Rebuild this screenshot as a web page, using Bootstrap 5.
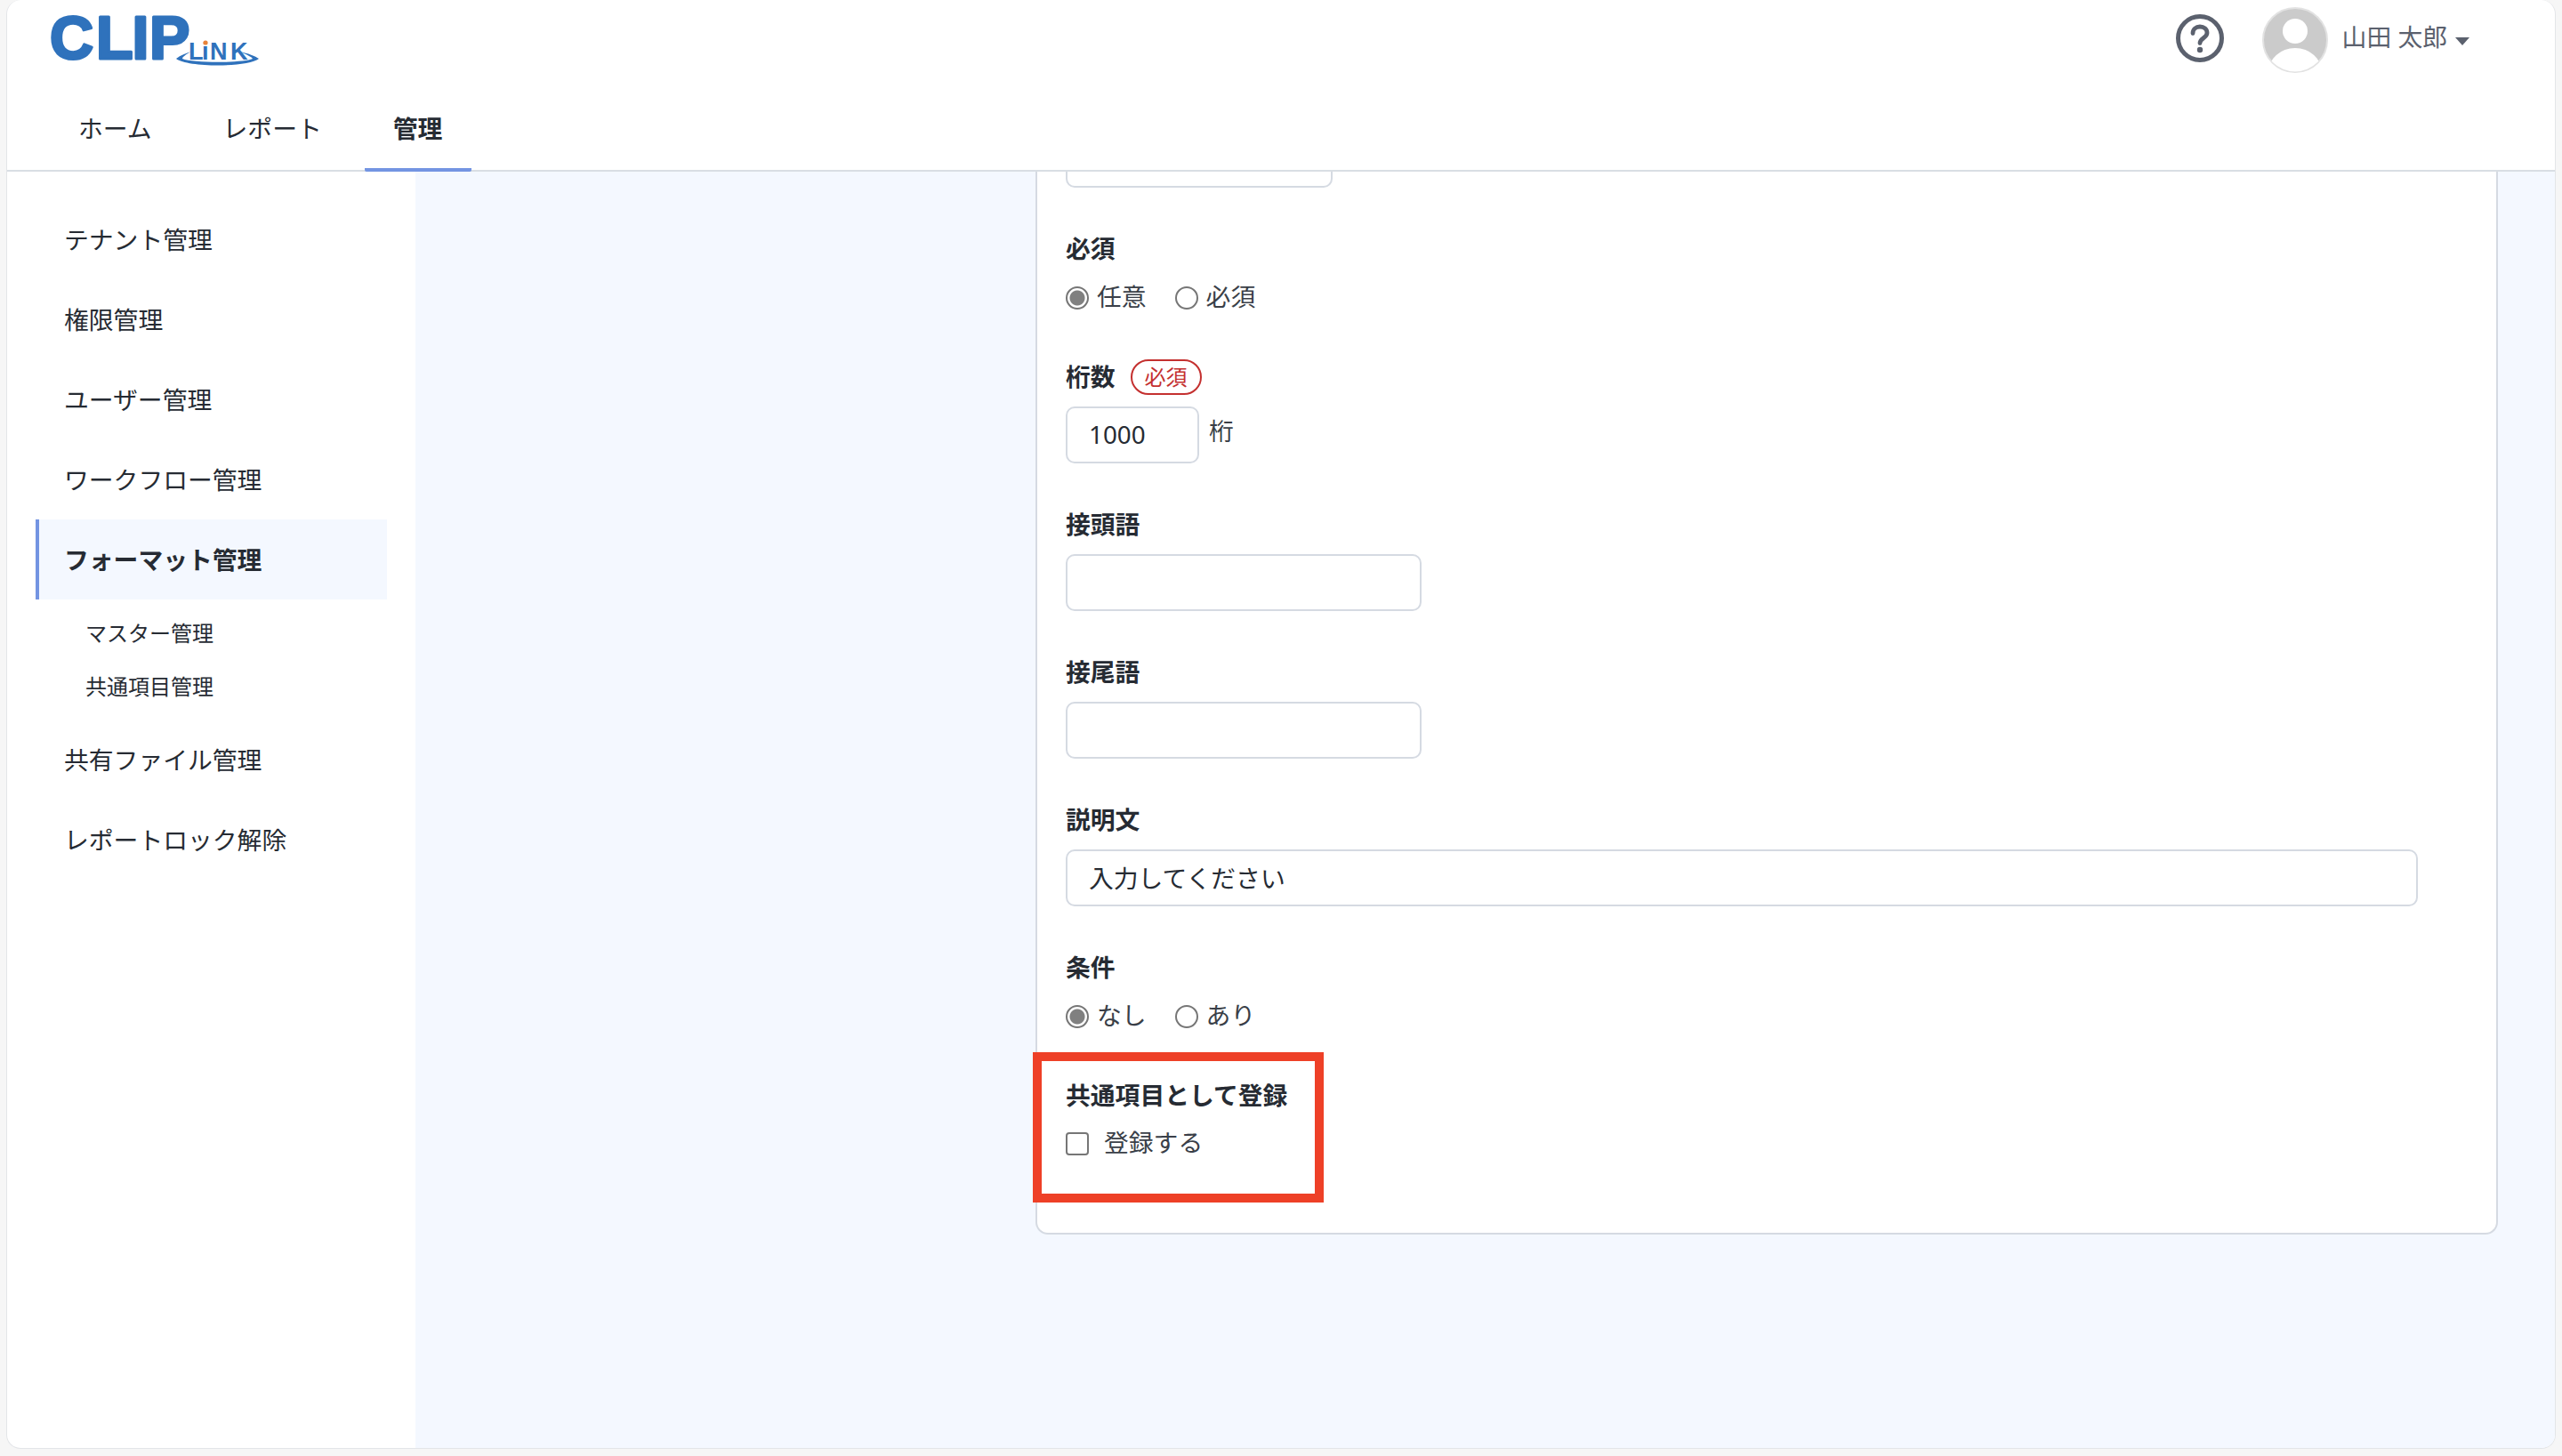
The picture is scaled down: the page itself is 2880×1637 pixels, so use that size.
<!DOCTYPE html>
<html lang="ja">
<head>
<meta charset="utf-8">
<title>フォーマット管理</title>
<link rel="stylesheet" href="https://cdn.jsdelivr.net/npm/bootstrap@5.3.0/dist/css/bootstrap.min.css">
<style>
html,body{height:100%;}
body{background:#f6f6f6;font-family:"Noto Sans","Noto Sans CJK JP",sans-serif;font-size:27.8px;color:#262b33;overflow:hidden;}
.app-window{margin:0 7px;height:1629px;background:#fff;border:1px solid #e3e5e8;border-top:0;border-radius:16px;overflow:hidden;display:flex;flex-direction:column;}
.app-head{height:193px;flex:none;border-bottom:2px solid #d9dee4;padding-left:42px;padding-right:96px;position:relative;}
.logo-wrap{display:block;width:262px;height:78px;}
.top-nav{margin-top:26px;margin-left:8px;}
.top-nav .nav-link{color:#262b33;font-size:27.8px;line-height:40px;padding:20px 30px 29px;border-bottom:4px solid transparent;border-radius:2px;height:89px;}
.top-nav .nav-link:nth-child(1){padding-right:29px;padding-left:30px;}
.top-nav .nav-link:nth-child(2){padding-left:51px;padding-right:48px;}
.top-nav .nav-link.on{font-weight:700;border-bottom-color:#7394e2;padding-left:32px;padding-right:33px;}
.head-right{position:absolute;right:96px;top:8px;display:flex;align-items:center;color:#5b616e;}
.help-ico{width:56px;height:56px;margin-right:39px;margin-top:-4px;}
.avatar-ico{width:74px;height:74px;margin-right:16px;margin-left:3px;}
.user-name{line-height:66px;margin-top:-8px;}
.caret-ico{width:16px;height:9px;margin-left:9px;margin-top:2px;}
.body-row{flex:1;display:flex;min-height:0;}
.side{width:459px;flex:none;padding:31px 32px 0 32px;}
.side-link{display:block;height:90px;line-height:90px;padding-left:32px;color:#262b33;text-decoration:none;}
.side-link.on{background:#f4f8ff;border-left:4px solid #7394e2;padding-left:28px;font-weight:700;}
.side-sub{padding:8px 0 7px;}
.side-sub a{display:block;height:60px;line-height:60px;padding-left:56px;font-size:24px;color:#262b33;text-decoration:none;}
.main-pane{flex:1;background:#f4f8ff;padding-left:697px;padding-right:64px;min-width:0;}
.form-sheet{background:#fff;border:2px solid #d5dae2;border-top:0;border-radius:0 0 14px 14px;padding:0 88px 0 32px;height:1195px;}
.stub-box{width:300px;height:18px;border:2px solid #d5dae2;border-top:0;border-radius:0 0 10px 10px;margin-bottom:48px;}
.fgroup{margin-bottom:48px;}
.flabel{font-weight:700;line-height:40px;height:40px;margin:0 0 14px;display:flex;align-items:center;}
.flabel.opt{margin-bottom:16px;}
.flabel.chk{margin-bottom:15px;}
.req-pill{flex:none;width:80px;height:40px;border:2px solid #c4302f;border-radius:20px;color:#c4302f;font-size:24px;font-weight:400;line-height:35px;text-align:center;margin-left:17px;margin-top:2px;}
.tbox.form-control{height:64px;border:2px solid #d5dae2;border-radius:10px;font-size:27.8px;color:#262b33;padding:0 24px 2px;box-shadow:none;}
.w-digit{width:150px;}
.w-mid{width:400px;}
.opt-row{display:flex;height:40px;align-items:center;line-height:40px;}
.opt-row .form-check{display:flex;align-items:center;margin:0 32px 0 0;padding:0;min-height:0;}
.opt-row .form-check-input{float:none;margin:0 9px 0 0;width:26px;height:26px;border:2px solid #767676;background-color:#fff;flex:none;}
.opt-row .form-check-input[type=radio]:checked{background-color:#fff;background-image:radial-gradient(circle,#808080 0,#808080 8px,#fff 9px);border-color:#767676;}
.opt-row .form-check-input[type=checkbox]{border-radius:4px;margin-right:17px;}
.opt-row .form-check-label{color:#3a3f48;padding-bottom:5px;line-height:40px;}
.unit-txt{margin-left:11px;margin-top:-8px;color:#3a3f48;}
.mark-host{position:relative;margin-bottom:0;}
.red-frame{position:absolute;left:-37px;top:-28px;width:327px;height:169px;border:10px solid #ee4027;pointer-events:none;}
</style>
</head>
<body>
<div class="app-window">
  <header class="app-head">
    <a class="logo-wrap" href="#">
      <svg width="262" height="78" viewBox="-1 -14 262 78" role="img" aria-label="CLIP LiNK">
        <path d="M147 52 C152 48 158 46 164 44 C158 47 154 50 154 52 C166 57 222 57 233 52 C232 50 226 47 218 44 C228 46 236 49 240 52 C228 62 160 62 147 52Z" fill="#2f72bc"/>
        <text x="5 57 97.500 117" y="51.500" font-family="Liberation Sans" font-weight="700" font-size="68" fill="#2f72bc" stroke="#2f72bc" stroke-width="3" stroke-linejoin="round">CLIP</text>
        <text x="161 176 185 208" y="53" font-family="Liberation Sans" font-weight="700" font-size="27" fill="#2f72bc">LiNK</text>
        <circle cx="180" cy="34" r="2.600" fill="#e8833a"/>
      </svg>
    </a>
    <nav class="nav top-nav">
      <a class="nav-link" href="#">ホーム</a>
      <a class="nav-link" href="#">レポート</a>
      <a class="nav-link on" href="#">管理</a>
    </nav>
    <div class="head-right">
      <svg class="help-ico" viewBox="0 0 56 56" fill="none" stroke="#5b616e">
        <circle cx="28" cy="28" r="24.5" stroke-width="5"/>
        <path d="M20 22.5c0-4.600 3.500-7.500 8-7.500s8 2.800 8 7c0 5.500-8 6-8 11.500" stroke-width="4.800" stroke-linecap="round"/>
        <circle cx="28" cy="41" r="3.200" fill="#5b616e" stroke="none"/>
      </svg>
      <svg class="avatar-ico" viewBox="0 0 74 74">
        <defs><clipPath id="avclip"><circle cx="37" cy="37" r="35.500"/></clipPath></defs>
        <circle cx="37" cy="37" r="36" fill="#cbcbcb" stroke="#e2e2e2" stroke-width="2"/>
        <g clip-path="url(#avclip)" fill="#fff">
          <circle cx="37" cy="27" r="14"/>
          <ellipse cx="37" cy="73" rx="30" ry="27"/>
        </g>
      </svg>
      <span class="user-name">山田 太郎</span>
      <svg class="caret-ico" viewBox="0 0 16 9"><path d="M0 0h16L8 9z" fill="#5b616e"/></svg>
    </div>
  </header>
  <div class="body-row">
    <aside class="side">
      <a class="side-link" href="#">テナント管理</a>
      <a class="side-link" href="#">権限管理</a>
      <a class="side-link" href="#">ユーザー管理</a>
      <a class="side-link" href="#">ワークフロー管理</a>
      <a class="side-link on" href="#">フォーマット管理</a>
      <div class="side-sub">
        <a href="#">マスター管理</a>
        <a href="#">共通項目管理</a>
      </div>
      <a class="side-link" href="#">共有ファイル管理</a>
      <a class="side-link" href="#">レポートロック解除</a>
    </aside>
    <main class="main-pane">
      <form class="form-sheet">
        <div class="stub-box"></div>
        <div class="fgroup">
          <div class="flabel opt">必須</div>
          <div class="opt-row">
            <div class="form-check"><input class="form-check-input" type="radio" name="r1" id="r1a" checked><label class="form-check-label" for="r1a">任意</label></div>
            <div class="form-check"><input class="form-check-input" type="radio" name="r1" id="r1b"><label class="form-check-label" for="r1b">必須</label></div>
          </div>
        </div>
        <div class="fgroup">
          <div class="flabel">桁数<span class="req-pill">必須</span></div>
          <div class="d-flex align-items-center">
            <input class="form-control tbox w-digit" type="text" value="1000">
            <span class="unit-txt">桁</span>
          </div>
        </div>
        <div class="fgroup">
          <div class="flabel">接頭語</div>
          <input class="form-control tbox w-mid" type="text">
        </div>
        <div class="fgroup">
          <div class="flabel">接尾語</div>
          <input class="form-control tbox w-mid" type="text">
        </div>
        <div class="fgroup">
          <div class="flabel">説明文</div>
          <input class="form-control tbox" type="text" value="入力してください">
        </div>
        <div class="fgroup">
          <div class="flabel opt">条件</div>
          <div class="opt-row">
            <div class="form-check"><input class="form-check-input" type="radio" name="r2" id="r2a" checked><label class="form-check-label" for="r2a">なし</label></div>
            <div class="form-check"><input class="form-check-input" type="radio" name="r2" id="r2b"><label class="form-check-label" for="r2b">あり</label></div>
          </div>
        </div>
        <div class="fgroup mark-host">
          <div class="flabel chk">共通項目として登録</div>
          <div class="opt-row">
            <div class="form-check"><input class="form-check-input" type="checkbox" id="c1"><label class="form-check-label" for="c1">登録する</label></div>
          </div>
          <div class="red-frame"></div>
        </div>
      </form>
    </main>
  </div>
</div>
<script src="https://cdn.jsdelivr.net/npm/bootstrap@5.3.0/dist/js/bootstrap.bundle.min.js"></script>
</body>
</html>
